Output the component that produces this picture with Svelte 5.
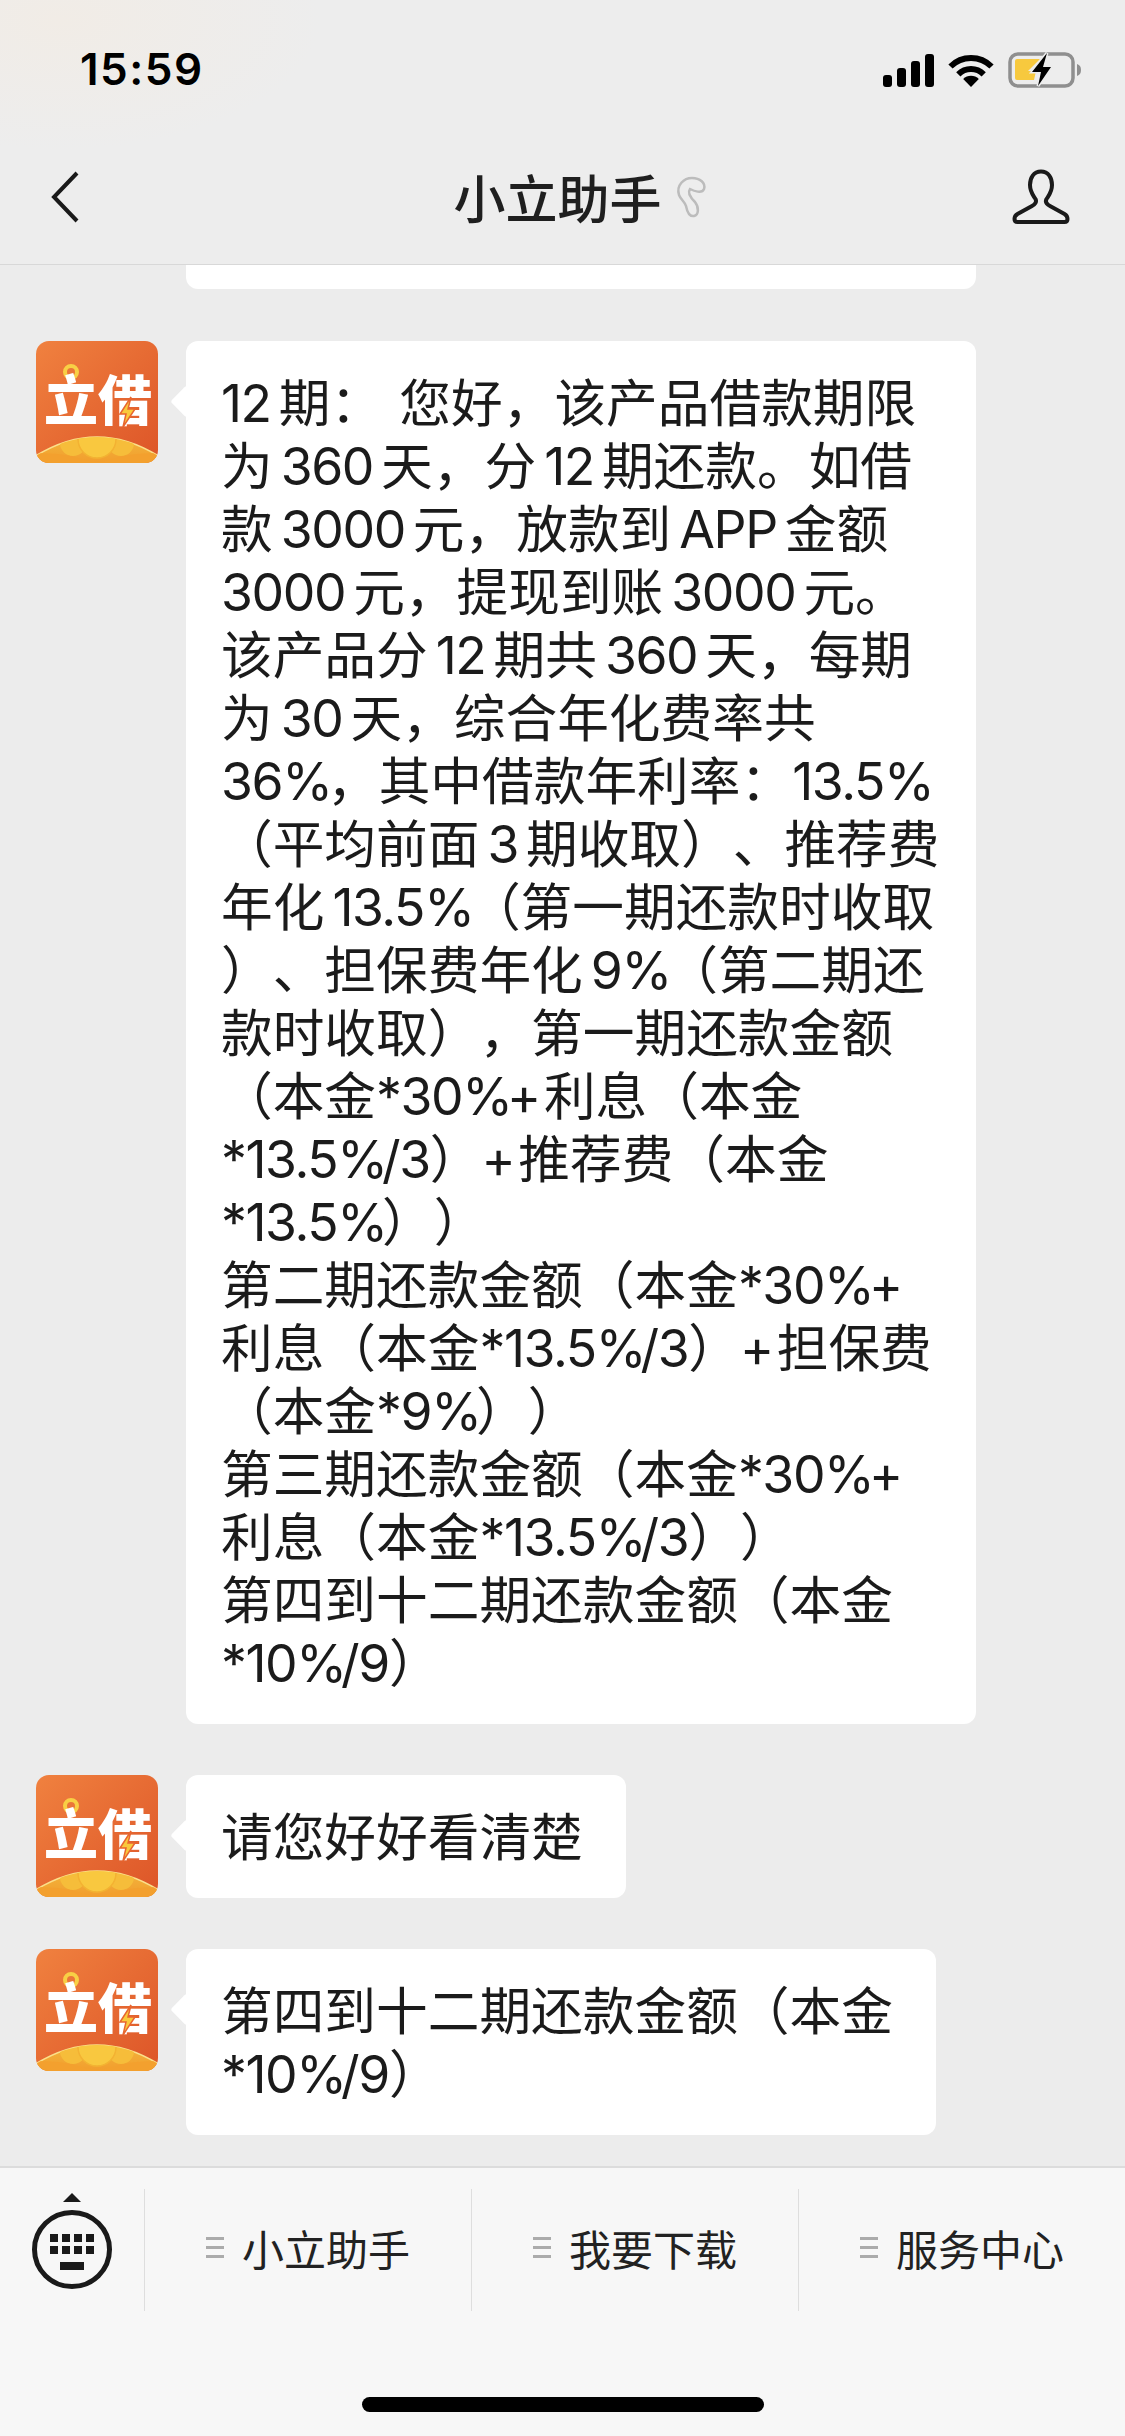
<script>
  const longLines = [
    "12期：\u2004您好，该产品借款期限",
    "为360天，分12期还款。如借",
    "款3000元，放款到APP金额",
    "3000元，提现到账3000元。",
    "该产品分12期共360天，每期",
    "为30天，综合年化费率共",
    "36%，其中借款年利率：13.5%",
    "（平均前面3期收取）、推荐费",
    "年化13.5%（第一期还款时收取",
    "）、担保费年化9%（第二期还",
    "款时收取），第一期还款金额",
    "（本金*30%+利息（本金",
    "*13.5%/3）+推荐费（本金",
    "*13.5%））",
    "第二期还款金额（本金*30%+",
    "利息（本金*13.5%/3）+担保费",
    "（本金*9%））",
    "第三期还款金额（本金*30%+",
    "利息（本金*13.5%/3））",
    "第四到十二期还款金额（本金",
    "*10%/9）",
  ];

  const tabs = ["小立助手", "我要下载", "服务中心"];
  const keyCols = [50, 62, 74, 86];
  const ideograph = /[\u4e00-\u9fff]/;

  // splits a line into cjk and latin runs, ios puts a small gap between the two
  function runs(line) {
    const out = [];
    for (const m of line.matchAll(/%|[0-9A-Za-z*+./]+|[^0-9A-Za-z*+%./]+/g)) {
      const text = m[0];
      const latin = /^[0-9A-Za-z*+%./]/.test(text);
      const before = line[m.index - 1] ?? "";
      const after = line[m.index + text.length] ?? "";
      out.push({
        text,
        latin,
        pct: text === "%",
        gapLeft: latin && ideograph.test(before) && /[0-9A-Za-z]/.test(text[0]),
        gapRight: latin && ideograph.test(after),
        plus: text.endsWith("+"),
      });
    }
    return out;
  }
</script>

{#snippet avatar()}
  <svg class="avatar" viewBox="0 0 122 122" aria-hidden="true">
    <defs>
      <linearGradient id="av-bg" x1="0" y1="0" x2="1" y2="1">
        <stop offset="0" stop-color="#f0813f" />
        <stop offset="1" stop-color="#dd5528" />
      </linearGradient>
      <linearGradient id="av-gold" x1="0" y1="0" x2="0" y2="1">
        <stop offset="0" stop-color="#f2b53c" />
        <stop offset="1" stop-color="#f29b2c" />
      </linearGradient>
      <clipPath id="av-clip"><rect width="122" height="122" rx="13" /></clipPath>
      <clipPath id="av-arc"><path d="M-2 116 Q61 76 124 116 V124 H-2 Z" /></clipPath>
    </defs>
    <g clip-path="url(#av-clip)">
      <rect width="122" height="122" fill="url(#av-bg)" />
      <circle cx="35" cy="31" r="6" fill="none" stroke="#f8cf45" stroke-width="4" />
      <text class="av-text" x="8" y="80">立借</text>
      <path d="M95 56 L84 73 H90 L87 86 L99 68 H92 Z" fill="#f9c93c" stroke="#e8662f" stroke-width="1.5" />
      <path d="M-2 116 Q61 76 124 116 V124 H-2 Z" fill="url(#av-gold)" stroke="#fbe08a" stroke-width="1.5" />
      <g clip-path="url(#av-arc)">
        <circle cx="37" cy="102" r="13" fill="#f6bd3a" />
        <circle cx="85" cy="102" r="13" fill="#f6bd3a" />
        <circle cx="61" cy="98" r="19" fill="#f9c83f" stroke="#f3b232" stroke-width="1.5" />
        <path d="M-2 112 Q30 112 45 118 Q61 124 77 118 Q92 112 124 112 V124 H-2 Z" fill="#f3a02e" />
      </g>
    </g>
  </svg>
{/snippet}

<div class="screen">
  <header class="nav">
    <div class="status">
      <span class="time">15:59</span>
      <div class="status-icons">
        <svg width="51" height="33" viewBox="0 0 51 33" aria-hidden="true">
          <rect x="0" y="21" width="9" height="12" rx="3" />
          <rect x="14" y="14" width="9" height="19" rx="3" />
          <rect x="28" y="7" width="9" height="26" rx="3" />
          <rect x="42" y="0" width="9" height="33" rx="3" />
        </svg>
        <svg width="46" height="33" viewBox="0 0 46 33" aria-hidden="true">
          <path d="M2.5 12.5 A29 29 0 0 1 43.5 12.5" fill="none" stroke="#000" stroke-width="6" />
          <path d="M10.3 20.3 A18 18 0 0 1 35.7 20.3" fill="none" stroke="#000" stroke-width="6" />
          <path d="M23 33 L15.2 25 A11 11 0 0 1 30.8 25 Z" />
        </svg>
        <svg width="75" height="36" viewBox="0 0 75 36" aria-hidden="true">
          <rect x="2" y="2" width="63" height="32" rx="8" fill="none" stroke="#8f8f8f" stroke-width="3.5" />
          <path d="M69 12 C72 13 73 15 73 18 C73 21 72 23 69 24 Z" fill="#8f8f8f" />
          <path d="M7 9 Q7 7 9 7 H32 L20 19 H28 L26 28 H9 Q7 28 7 26 Z" fill="#f7c93e" />
          <path d="M39 1 L24 20 H33 L30 34 L43 15 H35 Z" stroke="#ececec" stroke-width="3" paint-order="stroke" />
        </svg>
      </div>
    </div>
    <div class="title-row">
      <svg width="30" height="54" viewBox="0 0 30 54" aria-hidden="true">
        <path d="M26 3 L3 27 L26 51" fill="none" stroke="#1a1a1a" stroke-width="4" />
      </svg>
      <h1>
        小立助手
        <svg class="ear" width="60" height="60" viewBox="0 0 60 60" aria-hidden="true">
          <path d="M18 30 C15 20 23 13 31 13 C39 13 45 18 43 24 C41 29 33 26 29 24 C26 28 30 33 34 37 C38 42 38 50 33 51 C28 52 26 46 25 41 C24 37 20 35 18 30 Z" fill="none" stroke="#bcbcbc" stroke-width="2.5" />
        </svg>
      </h1>
      <svg width="58" height="56" viewBox="0 0 58 56" aria-hidden="true">
        <path d="M29 2.5 C21.5 2.5 18 9 18 16 C18 23 21 26 23.5 30 C25 33 23 35.5 20 37 L5.5 45 C3 46.5 2.5 48 2.5 50 C2.5 52 3.5 53 5.5 53 H52.5 C54.5 53 55.5 52 55.5 50 C55.5 48 55 46.5 52.5 45 L38 37 C35 35.5 33 33 34.5 30 C37 26 40 23 40 16 C40 9 36.5 2.5 29 2.5 Z" fill="none" stroke="#1a1a1a" stroke-width="4" />
      </svg>
    </div>
  </header>

  <main class="chat">
    <div class="stub"></div>

    <div class="row">
      {@render avatar()}
      <div class="bubble wide">
        {#each longLines as line}
          <div class="line">{#each runs(line) as r}<span class:latin={r.latin} class:pct={r.pct} class:gap-l={r.gapLeft} class:gap-r={r.gapRight} class:plus={r.plus}>{r.text}</span>{/each}</div>
        {/each}
      </div>
    </div>

    <div class="row">
      {@render avatar()}
      <div class="bubble">
        <div class="line">请您好好看清楚</div>
      </div>
    </div>

    <div class="row">
      {@render avatar()}
      <div class="bubble">
        <div class="line">第四到十二期还款金额（本金</div>
        <div class="line">{#each runs("*10%/9）") as r}<span class:latin={r.latin} class:pct={r.pct}>{r.text}</span>{/each}</div>
      </div>
    </div>
  </main>

  <footer class="toolbar">
    <div class="menu">
      <div class="key-cell">
        <svg width="144" height="122" viewBox="0 0 144 122" aria-hidden="true">
          <path d="M63 13 L72 4 L81 13 Z" fill="#1a1a1a" />
          <ellipse cx="72" cy="60.5" rx="37.5" ry="37" fill="none" stroke="#1a1a1a" stroke-width="5" />
          {#each keyCols as x}
            <rect {x} y="45" width="8" height="8" fill="#1a1a1a" />
            <rect {x} y="57" width="8" height="8" fill="#1a1a1a" />
          {/each}
          <rect x="60" y="73" width="24" height="8" fill="#1a1a1a" />
        </svg>
      </div>
      {#each tabs as tab}
        <div class="tab">
          <span class="burger"><i></i><i></i><i></i></span>
          <span>{tab}</span>
        </div>
      {/each}
    </div>
    <div class="home-bar"></div>
  </footer>
</div>

<style>
  :global(body) {
    margin: 0;
    background: #ececec;
  }

  .screen {
    width: 1125px;
    height: 2436px;
    display: flex;
    flex-direction: column;
    overflow: hidden;
    background: #ececec;
    color: #1b1b1b;
    font-family: Inter, "Noto Sans CJK SC", sans-serif;
  }

  .nav {
    height: 264px;
    flex: none;
    border-bottom: 1px solid #d8d8d8;
    background: radial-gradient(ellipse 260px 130px at 60px 20px, #f1ece6 0%, #ededed 100%);
  }

  .status {
    height: 147px;
    box-sizing: border-box;
    padding: 52px 42px 0 80px;
    display: flex;
    justify-content: space-between;
    align-items: flex-start;
  }

  .time {
    font-size: 44px;
    font-weight: 600;
    line-height: 34px;
    letter-spacing: 1.5px;
    color: #000;
  }

  .status-icons {
    display: flex;
    align-items: center;
    gap: 14px;
  }

  .status-icons svg {
    display: block;
  }

  .title-row {
    display: flex;
    align-items: center;
    justify-content: space-between;
    height: 100px;
    padding: 0 55px 0 51px;
  }

  h1 {
    position: relative;
    margin: 0 0 0 22px;
    font-size: 52px;
    line-height: 100px;
    font-weight: 500;
    color: #1f1f1f;
    font-family: "Noto Sans CJK SC", sans-serif;
  }

  .ear {
    position: absolute;
    left: 208px;
    top: 18px;
  }

  .chat {
    flex: 1;
    min-height: 0;
    display: flex;
    flex-direction: column;
    gap: 51px;
  }

  .stub {
    height: 24px;
    flex: none;
    width: 790px;
    margin-left: 186px;
    margin-bottom: 1px;
    background: #fff;
    border-radius: 0 0 12px 12px;
  }

  .row {
    display: flex;
    flex: none;
    align-items: flex-start;
    gap: 28px;
    padding-left: 36px;
  }

  .avatar {
    width: 122px;
    height: 122px;
    flex: none;
    display: block;
  }

  .av-text {
    font-family: "Noto Sans CJK SC", sans-serif;
    font-size: 54px;
    font-weight: 900;
    fill: #fff;
  }

  .bubble {
    position: relative;
    background: #fff;
    border-radius: 12px;
    padding: 27px 43px 33px 35px;
    font-size: 51.7px;
    line-height: 63px;
  }

  .bubble.wide {
    width: 790px;
    box-sizing: border-box;
    padding-right: 0;
  }

  .bubble::before {
    content: "";
    position: absolute;
    left: -11px;
    top: 49px;
    width: 23px;
    height: 23px;
    background: #fff;
    transform: rotate(45deg);
    border-radius: 3px;
  }

  .line {
    position: relative;
    height: 63px;
    white-space: pre;
    font-family: "Noto Sans CJK SC", sans-serif;
    text-spacing-trim: space-all;
  }

  .latin {
    font-family: Inter, sans-serif;
    letter-spacing: -1.4px;
  }

  .latin.pct {
    letter-spacing: -6px;
  }

  .gap-l {
    margin-left: 8px;
  }

  .gap-r {
    margin-right: 8px;
  }

  .gap-r.plus {
    margin-right: 4px;
  }

  .toolbar {
    height: 270px;
    flex: none;
    box-sizing: border-box;
    border-top: 2px solid #dcdcdc;
    background: #f7f7f7;
    padding-top: 21px;
  }

  .menu {
    display: grid;
    grid-template-columns: 144px repeat(3, 327px);
    height: 122px;
  }

  .key-cell svg {
    display: block;
  }

  .tab {
    display: flex;
    align-items: center;
    justify-content: center;
    gap: 18px;
    padding-bottom: 5px;
    border-left: 1.5px solid #dedede;
    font-size: 42px;
    color: #222;
    font-family: "Noto Sans CJK SC", sans-serif;
  }

  .burger {
    display: flex;
    flex-direction: column;
    gap: 6px;
    width: 18px;
  }

  .burger i {
    display: block;
    height: 3px;
    background: #ababab;
  }

  .home-bar {
    width: 402px;
    height: 15px;
    margin: 86px auto 0;
    border-radius: 8px;
    background: #000;
  }
</style>
